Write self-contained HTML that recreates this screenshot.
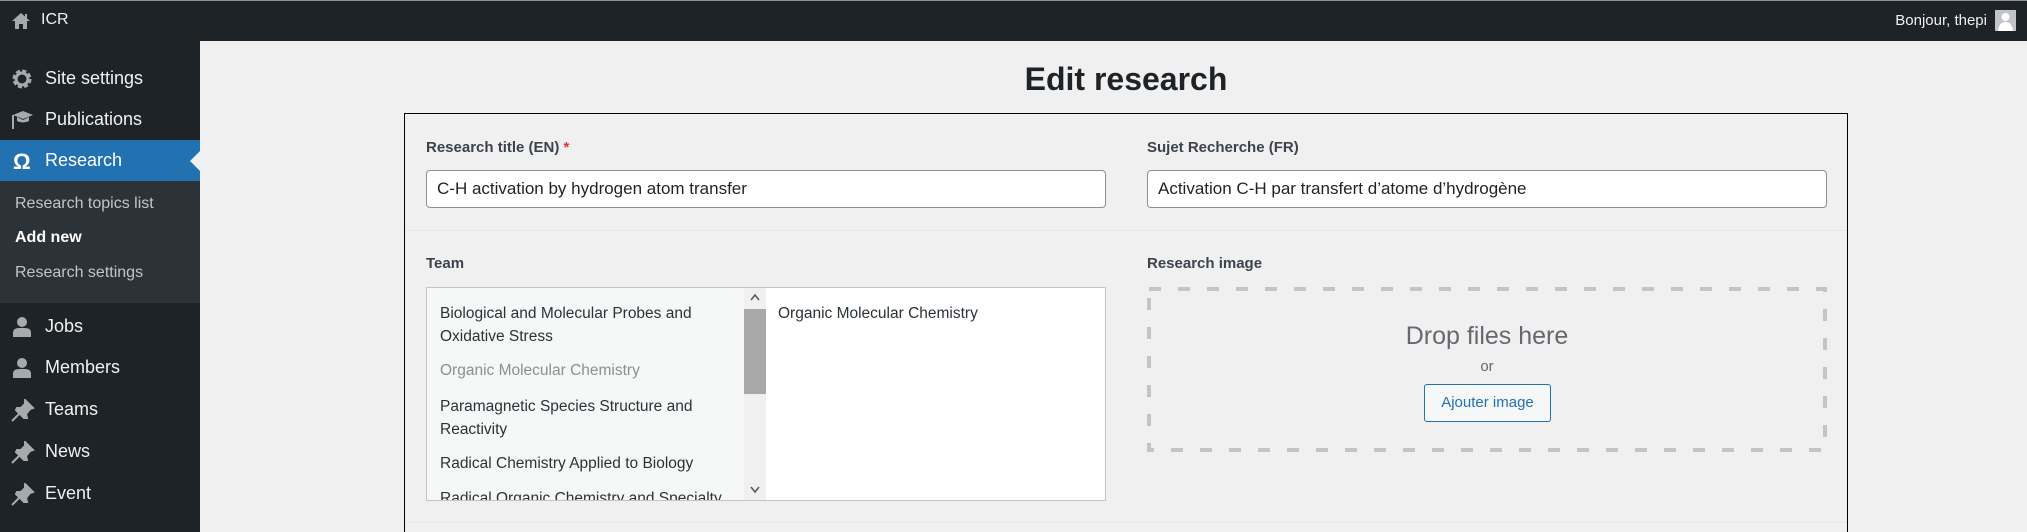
<!DOCTYPE html>
<html style="width:2027px;height:532px;overflow:hidden"><head><meta charset="utf-8"><style>
*{box-sizing:border-box;margin:0;padding:0}
body{width:2027px;height:532px;overflow:hidden;background:#f0f0f1;font-family:"Liberation Sans",sans-serif;position:relative;color:#1d2327}
.top{position:absolute;left:0;top:0;width:2027px;height:41px;background:#1d2327;border-top:1px solid #8c8f94}
.side{position:absolute;left:0;top:41px;width:200px;height:491px;background:#1d2327}
.item{position:absolute;left:0;width:200px;height:41px;color:#f0f0f1;font-size:18px;line-height:41px;padding-left:45px}
.item svg{position:absolute;left:11px;top:10px}
.sub{position:absolute;left:0;top:140px;width:200px;height:122px;background:#2c3338}
.sub div{position:absolute;left:15px;font-size:16px;color:#c3c4c7}
.abs{position:absolute}
.lbl{position:absolute;font-size:15px;font-weight:bold;color:#3c434a}
.inp{position:absolute;background:#fff;border:1px solid #8c8f94;border-radius:4px;font-size:17px;line-height:35px;padding-left:10px;color:#1d2327}
.li{position:absolute;left:13px;font-size:15.5px;color:#2c3338;line-height:23px}
</style></head><body>
<div class="top">
 <svg class="abs" style="left:11px;top:10px" width="20" height="20" viewBox="0 0 20 20"><path d="M10 2 L1 10 H4 V18 H8 V13 H12 V18 H16 V10 H19 Z" fill="#a7aaad"/><rect x="14" y="3" width="2" height="4" fill="#a7aaad"/></svg>
 <div class="abs" style="left:41px;top:10px;color:#f0f0f1;font-size:16px">ICR</div>
 <div class="abs" style="right:40px;top:11px;color:#f0f0f1;font-size:15px">Bonjour, thepi</div>
 <div class="abs" style="left:1995px;top:9px;width:21px;height:21px;background:#c3c4c7"><svg width="21" height="21" viewBox="0 0 21 21"><circle cx="10.5" cy="7" r="4" fill="#fff"/><path d="M3 21 Q4 12 10.5 12 Q17 12 18 21Z" fill="#fff"/></svg></div>
</div>
<div class="side">
 <div class="item" style="top:17px"><svg width="22" height="22" viewBox="0 0 22 22"><circle cx="11" cy="11" r="7" fill="none" stroke="#a7aaad" stroke-width="5" stroke-dasharray="3.5 2"/><circle cx="11" cy="11" r="6" fill="none" stroke="#a7aaad" stroke-width="3"/></svg>Site settings</div>
 <div class="item" style="top:58px"><svg width="24" height="22" viewBox="0 0 24 22"><path d="M2 6 L12 2 L22 6 L12 10 Z M6 8 V12 Q12 15 18 12 V8 L12 11 Z" fill="#a7aaad"/><rect x="1" y="6" width="2" height="14" fill="#a7aaad"/></svg>Publications</div>
 <div class="item" style="top:99px;background:#2271b1;color:#fff"><svg width="22" height="22" viewBox="0 0 22 22"><text x="2" y="19" font-size="22" font-weight="bold" fill="#fff" font-family="Liberation Sans">Ω</text></svg>Research</div>
 <svg class="abs" style="left:190px;top:110px" width="10" height="20"><path d="M10 0 L0 10 L10 20Z" fill="#f0f0f1"/></svg>
 <div class="sub">
  <div style="top:14px">Research topics list</div>
  <div style="top:48px;color:#fff;font-weight:bold">Add new</div>
  <div style="top:83px">Research settings</div>
 </div>
 <div class="item" style="top:265px"><svg width="22" height="22" viewBox="0 0 22 22"><circle cx="11" cy="6" r="5" fill="#a7aaad"/><path d="M2 21 V17 Q2 12 8 12 H14 Q20 12 20 17 V21Z" fill="#a7aaad"/></svg>Jobs</div>
 <div class="item" style="top:306px"><svg width="22" height="22" viewBox="0 0 22 22"><circle cx="11" cy="6" r="5" fill="#a7aaad"/><path d="M2 21 V17 Q2 12 8 12 H14 Q20 12 20 17 V21Z" fill="#a7aaad"/></svg>Members</div>
 <div class="item" style="top:348px"><svg width="24" height="24" viewBox="0 0 24 24"><path d="M14 1 L22 9 L19 10 L15 15 L16 19 L13 19 L5 11 L6 9 L10 9 L14 5 Z M8 15 L1 22" fill="#a7aaad" stroke="#a7aaad" stroke-width="2"/></svg>Teams</div>
 <div class="item" style="top:390px"><svg width="24" height="24" viewBox="0 0 24 24"><path d="M14 1 L22 9 L19 10 L15 15 L16 19 L13 19 L5 11 L6 9 L10 9 L14 5 Z M8 15 L1 22" fill="#a7aaad" stroke="#a7aaad" stroke-width="2"/></svg>News</div>
 <div class="item" style="top:432px"><svg width="24" height="24" viewBox="0 0 24 24"><path d="M14 1 L22 9 L19 10 L15 15 L16 19 L13 19 L5 11 L6 9 L10 9 L14 5 Z M8 15 L1 22" fill="#a7aaad" stroke="#a7aaad" stroke-width="2"/></svg>Event</div>
</div>
<div class="abs" style="left:200px;width:1852px;top:61px;text-align:center;font-size:32px;font-weight:bold;color:#1d2327">Edit research</div>
<div class="abs" style="left:404px;top:113px;width:1444px;height:419px;border:1.5px solid #000;border-bottom:none"></div>
<div class="abs" style="left:406px;top:230px;width:1440px;height:1px;background:#e6e6e6"></div>
<div class="abs" style="left:406px;top:522px;width:1440px;height:1px;background:#e6e6e6"></div>
<div class="lbl" style="left:426px;top:139px">Research title (EN) <span style="color:#d63638">*</span></div>
<div class="inp" style="left:426px;top:170px;width:680px;height:38px">C-H activation by hydrogen atom transfer</div>
<div class="lbl" style="left:1147px;top:139px">Sujet Recherche (FR)</div>
<div class="inp" style="left:1147px;top:170px;width:680px;height:38px">Activation C-H par transfert d’atome d’hydrogène</div>
<div class="lbl" style="left:426px;top:255px">Team</div>
<div class="abs" style="left:426px;top:287px;width:680px;height:214px;border:1px solid #c3c4c7;background:#fff;overflow:hidden">
 <div class="abs" style="left:0;top:0;width:317px;height:212px;background:#f6f7f7;overflow:hidden">
  <div class="li" style="top:14px">Biological and Molecular Probes and<br>Oxidative Stress</div>
  <div class="li" style="top:71px;color:#8c8f94">Organic Molecular Chemistry</div>
  <div class="li" style="top:107px">Paramagnetic Species Structure and<br>Reactivity</div>
  <div class="li" style="top:164px">Radical Chemistry Applied to Biology</div>
  <div class="li" style="top:199px">Radical Organic Chemistry and Specialty</div>
 </div>
 <div class="abs" style="left:317px;top:0;width:22px;height:212px;background:#f0f0f0">
  <svg class="abs" style="left:6px;top:5px" width="10" height="8"><path d="M1 7 L5 2 L9 7" fill="none" stroke="#555" stroke-width="1.5"/></svg>
  <div class="abs" style="left:0;top:21px;width:22px;height:85px;background:#a8a8a8"></div>
  <svg class="abs" style="left:6px;top:198px" width="10" height="8"><path d="M1 1 L5 6 L9 1" fill="none" stroke="#555" stroke-width="1.5"/></svg>
 </div>
 <div class="li" style="left:351px;top:14px">Organic Molecular Chemistry</div>
</div>
<div class="lbl" style="left:1147px;top:255px">Research image</div>
<svg class="abs" style="left:1147px;top:287px" width="680" height="165"><rect x="2" y="2" width="676" height="161" fill="none" stroke="#c3c4c7" stroke-width="4" stroke-dasharray="12 17"/></svg>
<div class="abs" style="left:1147px;top:322px;width:680px;text-align:center;font-size:25px;color:#646970">Drop files here</div>
<div class="abs" style="left:1147px;top:358px;width:680px;text-align:center;font-size:15px;color:#646970">or</div>
<div class="abs" style="left:1424px;top:384px;width:127px;height:38px;border:1px solid #2271b1;border-radius:3px;background:#f6f7f7;color:#2271b1;font-size:15px;line-height:36px;text-align:center">Ajouter image</div>
</body></html>
